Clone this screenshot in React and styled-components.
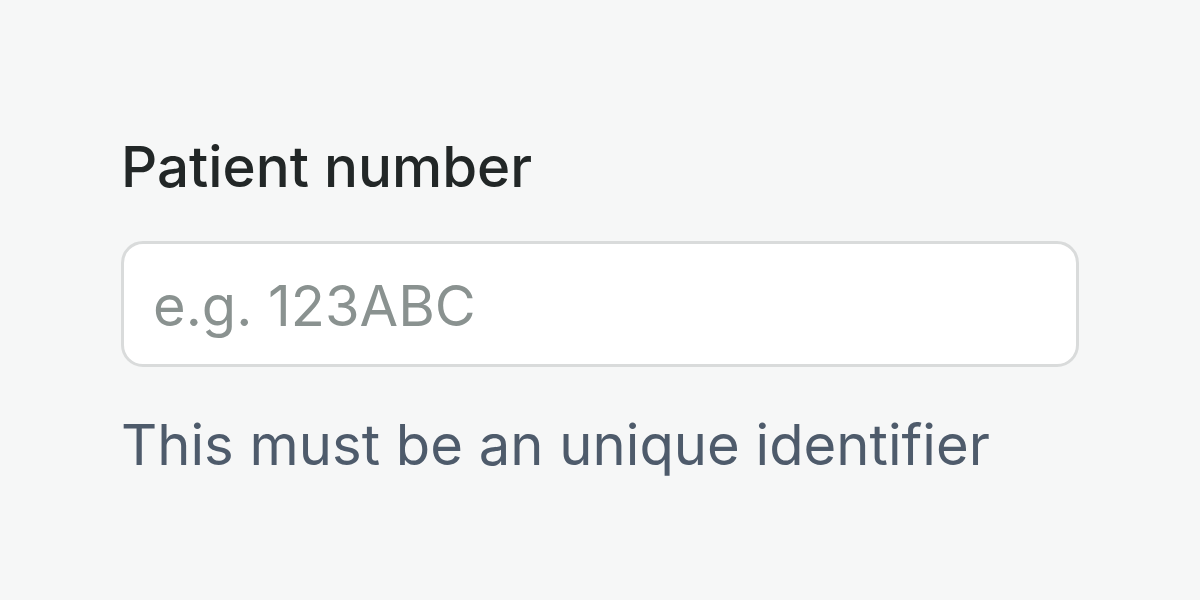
import React from 'react';
import styled, { createGlobalStyle } from 'styled-components';

const GlobalStyle = createGlobalStyle`
  html, body {
    margin: 0;
    padding: 0;
    background: #f6f7f7;
  }
  body {
    font-family: Inter, 'Noto Sans', sans-serif;
  }
`;

const Page = styled.div`
  width: 1200px;
  height: 600px;
  box-sizing: border-box;
  padding: 139px 121px 0 121px;
`;

const Field = styled.div`
  display: flex;
  flex-direction: column;
  width: 958px;
`;

const Label = styled.label`
  font-size: 56.5px;
  line-height: 56px;
  font-weight: 550;
  color: #222727;
  margin-bottom: 46px;
`;

const Input = styled.input`
  box-sizing: border-box;
  width: 100%;
  height: 126px;
  border: 3px solid #d9dbdb;
  border-radius: 22px;
  background: #ffffff;
  padding: 4px 29px 0 29px;
  font-family: Inter, 'Noto Sans', sans-serif;
  font-size: 56px;
  color: #222727;
  outline: none;

  &::placeholder {
    color: #8a9290;
  }
`;

const Hint = styled.p`
  margin: 50px 0 0 0;
  font-size: 56.2px;
  line-height: 56px;
  color: #4e5b6b;
`;

export default function App() {
  return (
    <>
      <GlobalStyle />
      <Page>
        <Field>
          <Label htmlFor="patient">Patient number</Label>
          <Input id="patient" placeholder="e.g. 123ABC" />
          <Hint>This must be an unique identifier</Hint>
        </Field>
      </Page>
    </>
  );
}
